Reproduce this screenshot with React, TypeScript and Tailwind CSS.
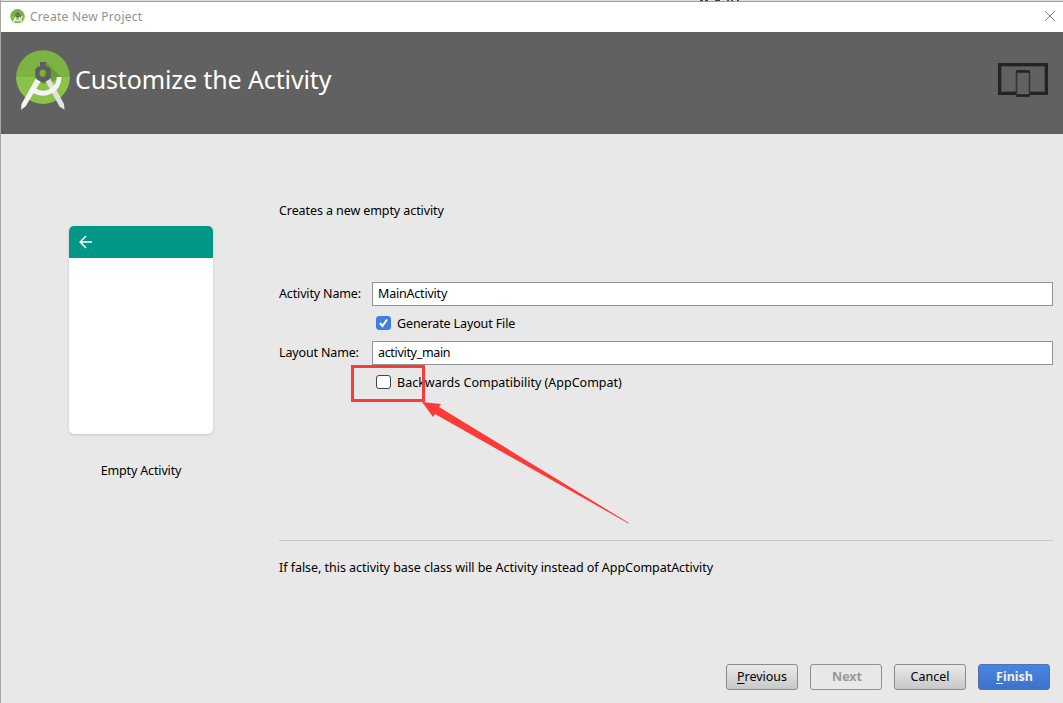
import type { ReactNode } from "react";
import clsx from "clsx";

function StudioLogo({ className }: { className?: string }) {
  return (
    <svg viewBox="0 0 54 60" className={className}>
      <circle cx="27" cy="27" r="26.800" fill="#7cb342" />
      <path d="M.2 27a26.800 26.800 0 0 0 53.600 0z" fill="#8bc34a" />
      <path d="M30 12 45 27l-9 5-9 2z" fill="#5f8f35" opacity="0.65" />
      <path d="M19.500 29 5.500 54 5 59.800 9.500 56.500 25 31z" fill="#f4f4f4" />
      <path d="M34.500 29 48 54 48.500 59.800 43.500 56.500 29.500 31z" fill="#e2e2e2" />
      <path d="M43.200 27A16.200 16.200 0 0 1 17.500 40" fill="none" stroke="#f4f4f4" strokeWidth="4.800" />
      <path
        fillRule="evenodd"
        d="M24 12h6v4.500h2.200l2.500 3V27l-2.500 3-5.200 3-5.200-3-2.500-3v-7.500l2.500-3H24zM27 19.800a3.500 3.500 0 1 0 0 7 3.500 3.500 0 0 0 0-7z"
        fill="#5e5e5e"
      />
    </svg>
  );
}

function DevicesIcon() {
  return (
    <svg width="52" height="36" viewBox="0 0 52 36" fill="none">
      <rect x="2.500" y="2.500" width="47" height="29" stroke="#212424" strokeWidth="3" />
      <rect x="4.500" y="4.500" width="43" height="25" stroke="#4a4c4c" />
      <rect x="19.500" y="9" width="13" height="25" rx="1" fill="#616161" stroke="#303333" strokeWidth="1.500" />
      <path d="M19.500 9.500h13M19.500 33.500h13" stroke="#212424" strokeWidth="2.500" />
    </svg>
  );
}

function TitleBar() {
  return (
    <div className="flex h-[30px] items-center bg-white pl-[9px] pr-[7px]">
      <StudioLogo className="mt-[-1px] h-4 w-[15px]" />
      <span className="ml-[5px] text-[12px] tracking-[0.28px] text-[#929292]">Create New Project</span>
      <svg width="12" height="12" viewBox="0 0 12 12" className="mt-[-2px] ml-auto">
        <path d="m1 1 10 10M11 1 1 11" stroke="#858585" />
      </svg>
    </div>
  );
}

function Header() {
  return (
    <div className="flex h-[102px] items-center bg-[#616161] pl-[15px] pr-[14px]">
      <StudioLogo className="mt-[-6px] h-[60px] w-[54px]" />
      <h1 className="ml-[5px] mt-[-8px] text-[25px] tracking-[-0.12px] text-white">Customize the Activity</h1>
      <div className="ml-auto mt-[-6px]">
        <DevicesIcon />
      </div>
    </div>
  );
}

function ActivityPreview() {
  return (
    <div className="flex w-36 flex-col items-center pt-[92px]">
      <div className="h-52 w-full overflow-hidden rounded-[5px] bg-white shadow-[0_1px_3px_rgba(0,0,0,0.15)]">
        <div className="flex h-8 items-center bg-[#009688] pl-[10px]">
          <svg width="14" height="14" viewBox="0 0 14 14" fill="none" stroke="#fff" strokeWidth="1.600">
            <path d="M13 7H1.500M7 1 1.200 7 7 13" />
          </svg>
        </div>
      </div>
      <div className="mt-[28px] tracking-[-0.15px]">Empty Activity</div>
    </div>
  );
}

function Field({ label, value, className }: { label: string; value: string; className?: string }) {
  return (
    <label className="flex h-6 items-center">
      <span className="w-[93px] tracking-[-0.15px]">{label}</span>
      <input
        defaultValue={value}
        className={clsx("h-6 flex-1 border border-[#949494] bg-white px-[5px] pb-px outline-none", className)}
      />
    </label>
  );
}

function CheckOption({ label, checked, className }: { label: string; checked?: boolean; className?: string }) {
  return (
    <div className="flex h-[35px] items-center pl-[97px]">
      <span
        className={clsx(
          "mb-[2px] flex h-[14px] w-[15px] items-center justify-center rounded-[3px] border",
          checked ? "border-[#3f7bd8] bg-[#4080dd]" : "border-[#444] bg-white",
        )}
      >
        {checked && (
          <svg width="11" height="10" viewBox="0 0 11 10" fill="none" stroke="#fff" strokeWidth="2">
            <path d="m2 5 2.500 3L9 1.500" />
          </svg>
        )}
      </span>
      <span className={clsx("ml-[6px]", className)}>{label}</span>
    </div>
  );
}

// Red frame and arrow pointing at the AppCompat checkbox
function Callout() {
  return (
    <svg width="280" height="160" viewBox="0 0 280 160" className="pointer-events-none absolute left-[72px] top-[231px]">
      <rect x="1.500" y="1.500" width="71" height="34" fill="none" stroke="#fc3b39" strokeWidth="3" />
      <path d="M71 37 90 39 88 42 278 158 277.500 158.500 84 49 82 52z" fill="#fc3b39" />
    </svg>
  );
}

function Button({ children, className }: { children: ReactNode; className?: string }) {
  return (
    <button
      className={clsx(
        "h-[26px] w-[72px] rounded-[3px] border pb-px",
        className ?? "border-[#8b8b8b] bg-linear-to-b from-[#eaeaea] to-[#c8c8c8]",
      )}
    >
      {children}
    </button>
  );
}

export default function App() {
  return (
    <div className="flex h-[703px] w-[1063px] flex-col overflow-hidden border-l border-[#a5a5a5] bg-[#e8e8e8] font-['Noto_Sans','Open_Sans',sans-serif] text-[12.500px] leading-[18px] text-black">
      <div className="h-[2px] shrink-0 border-b border-[#a0a0a0] bg-[#e0e0e0]">
        <svg width="40" height="1" className="ml-[699px] block" stroke="#444">
          <path d="M0 .5h3M5 .5h3M15 .5h5M27 .5h2M31 .5h2M37 .5h2" />
        </svg>
      </div>
      <TitleBar />
      <Header />

      <div className="flex h-[504px] pl-[68px] pr-[10px]">
        <ActivityPreview />
        <div className="relative ml-[66px] flex flex-1 flex-col">
          <p className="mt-[68px] tracking-[-0.09px]">Creates a new empty activity</p>
          <div className="mt-[62px]">
            <Field label="Activity Name:" value="MainActivity" className="tracking-[-0.2px]" />
            <CheckOption label="Generate Layout File" checked className="tracking-[-0.12px]" />
            <Field label="Layout Name:" value="activity_main" className="tracking-[-0.32px]" />
            <CheckOption label="Backwards Compatibility (AppCompat)" />
          </div>
          <div className="mt-[140px] border-t border-[#c9c9c9] pt-[18px] tracking-[-0.04px]">
            If false, this activity base class will be Activity instead of AppCompatActivity
          </div>
          <Callout />
        </div>
      </div>

      <div className="flex justify-end gap-3 pr-[13px] pt-[26px]">
        <Button>
          <span className="underline underline-offset-2">P</span>revious
        </Button>
        <Button className="border-[#8f8f8f] pl-[2px] font-bold text-[#999]">Next</Button>
        <Button>Cancel</Button>
        <Button className="border-[#5473a5] bg-linear-to-b from-[#4785e1] to-[#3e72cb] pl-[1px] font-bold text-[#f0f0f0]">
          <span className="underline underline-offset-2">F</span>inish
        </Button>
      </div>
    </div>
  );
}
